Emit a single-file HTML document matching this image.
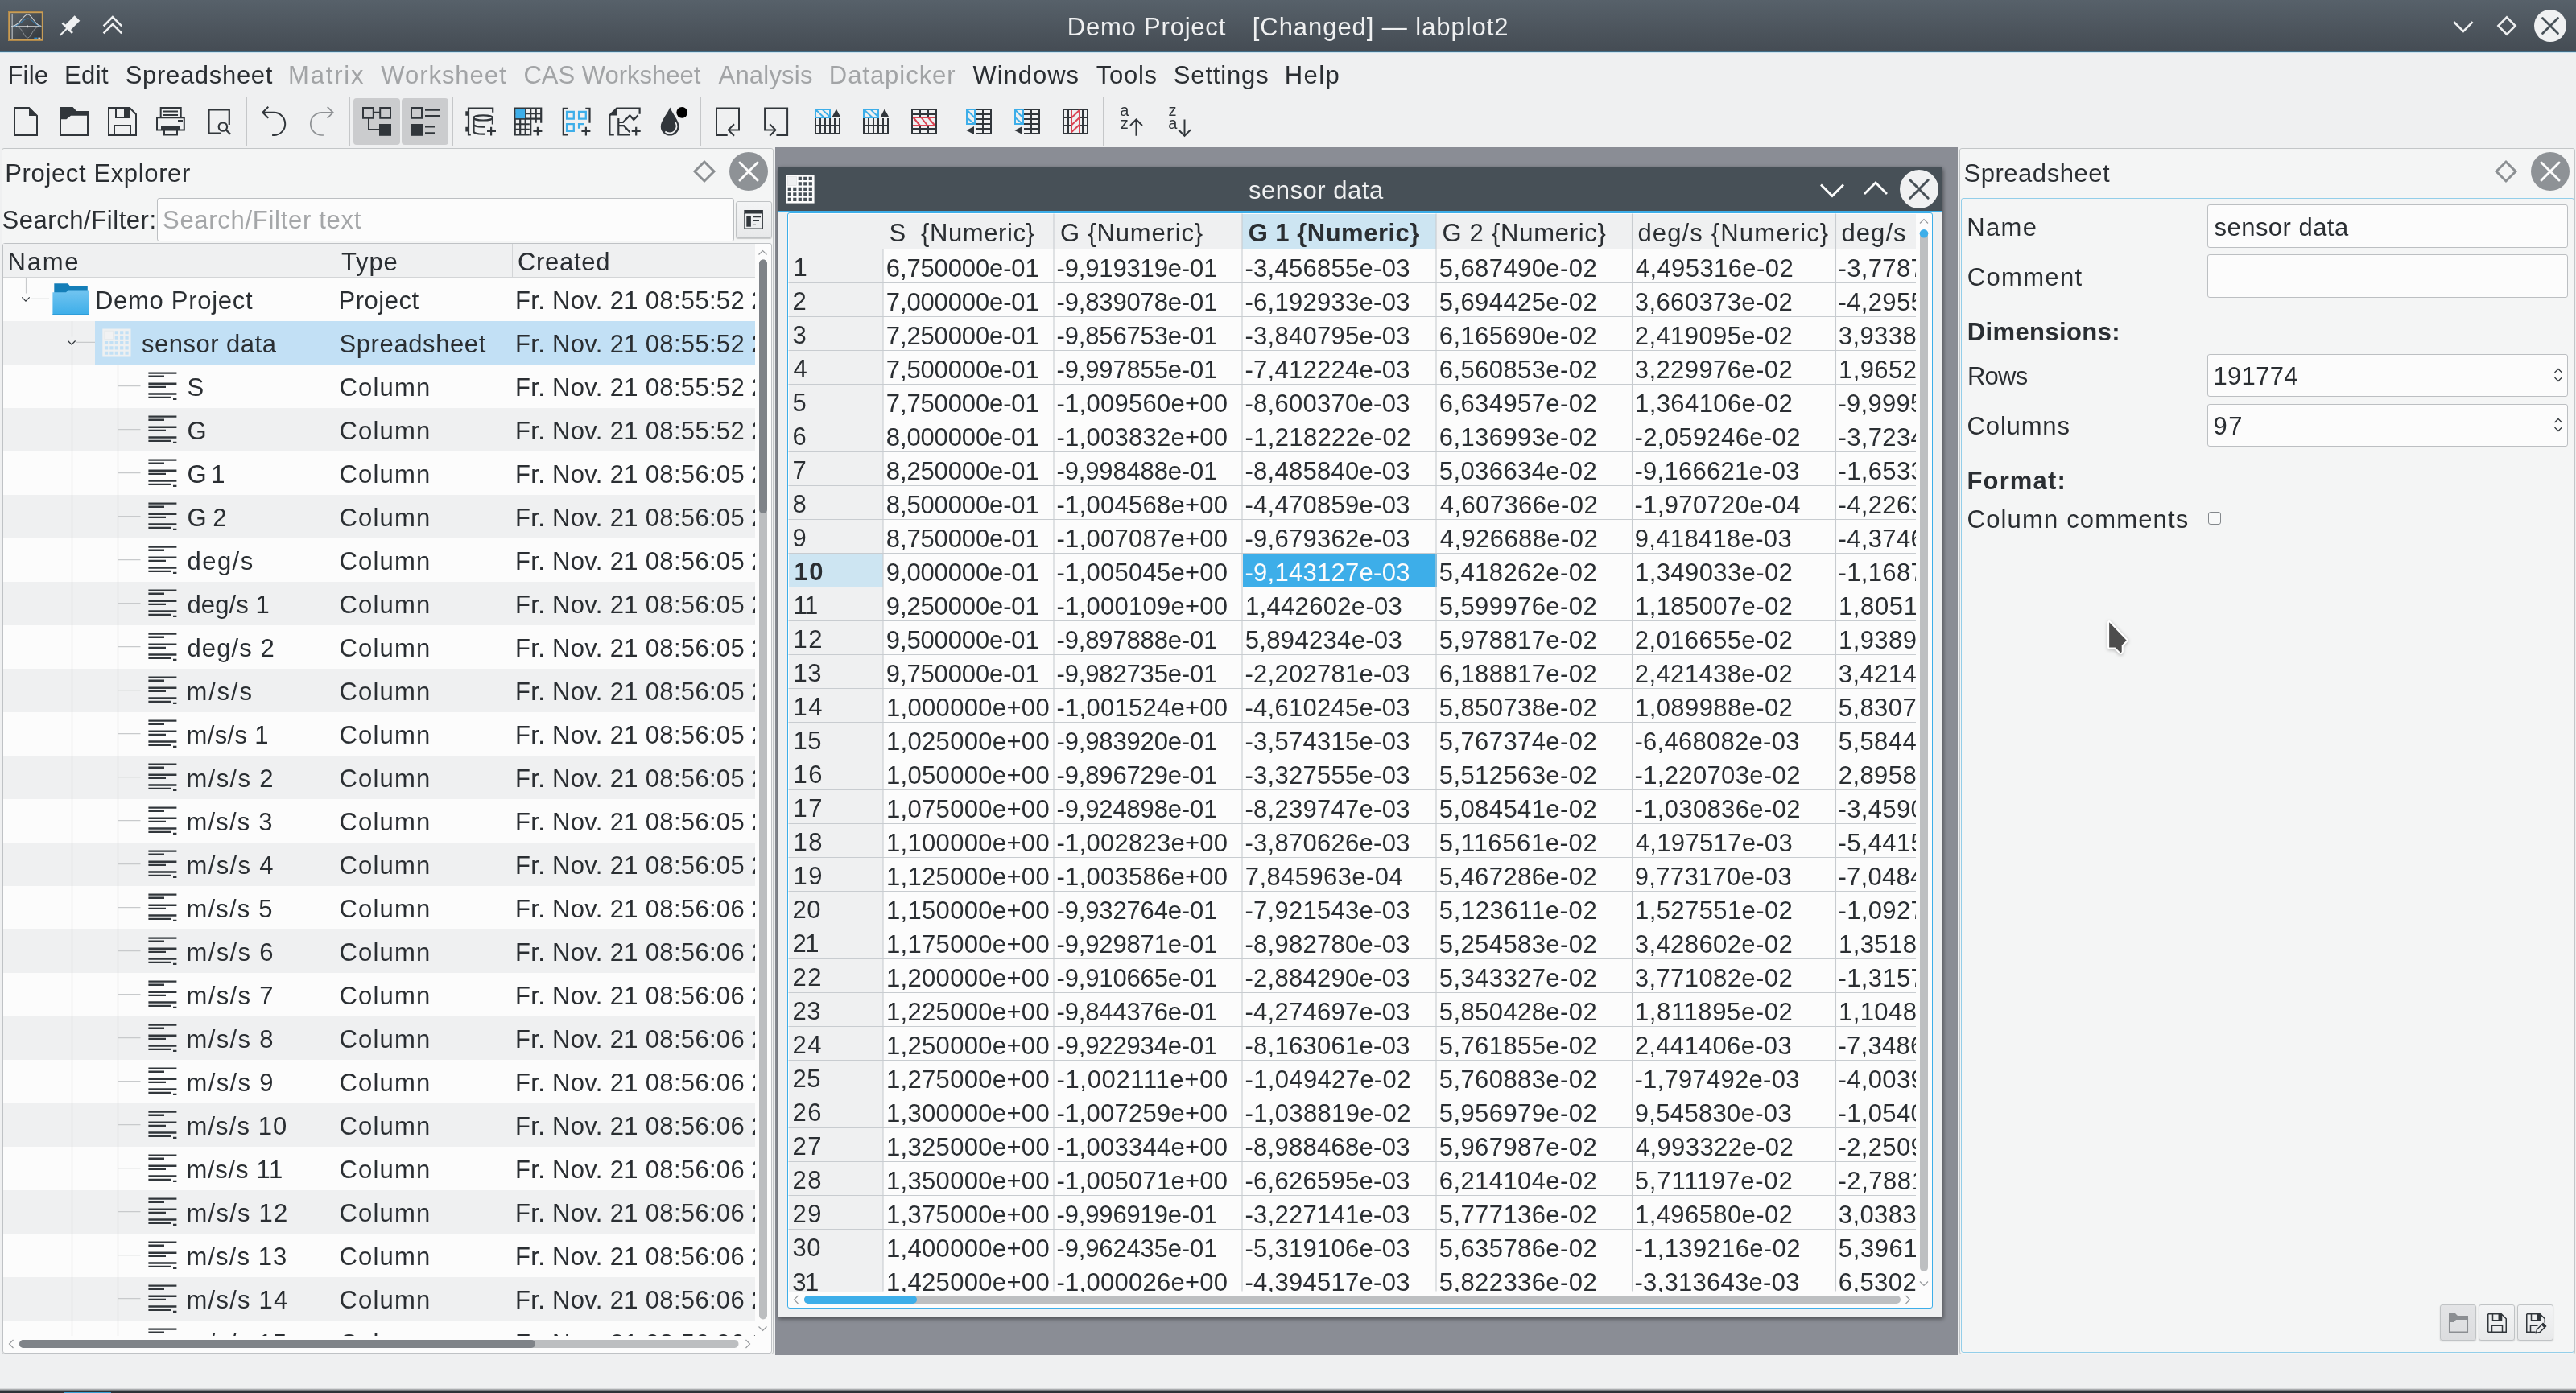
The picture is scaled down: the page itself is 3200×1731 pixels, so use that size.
<!DOCTYPE html>
<html lang="de"><head><meta charset="utf-8"><title>Demo Project [Changed] — labplot2</title>
<style>
html,body{margin:0;padding:0}
body{width:3200px;height:1731px;overflow:hidden;background:#eff0f1}
#app{position:relative;will-change:transform;width:3200px;height:1731px;overflow:hidden;background:#eff0f1;font-family:"Liberation Sans",sans-serif;font-size:31px;color:#2a2e32}
#app div,#app span,#app svg{position:absolute;box-sizing:border-box}
#app>div{left:0;top:0}
.t{white-space:pre;line-height:35px;height:35px}
.b{font-weight:bold}
</style></head>
<body><div id="app">
<div id="titlebar"><div style="left:0px;top:0px;width:3200px;height:64px;background:linear-gradient(#57616a 0%,#4a525a 70%,#454c54 100%)"></div><div style="left:0px;top:63px;width:3200px;height:3px;background:linear-gradient(rgba(61,174,233,.35) 0 33.3%,#3daee9 33.3% 66.6%,rgba(61,174,233,.22) 66.6%)"></div><svg style="left:10px;top:13.5px" width="44" height="37" viewBox="0 0 44 37" ><defs><linearGradient id="agi" x1="0" y1="0" x2="1" y2="1"><stop offset="0" stop-color="#5a6167"/><stop offset="1" stop-color="#33383d"/></linearGradient></defs><rect width="44" height="37" fill="#c79d58"/><rect x=".6" y=".6" width="42.8" height="35.8" fill="none" stroke="#a88247" stroke-width=".8"/><rect x="2.2" y="2.2" width="39.6" height="32.6" fill="url(#agi)"/><path d="M5.2 3v31" stroke="#a9adb1" stroke-width="1.4"/><path d="M4 18.8h37.5M10.5 17.6v2.4M24.4 17.4v2.8M38 17.6v2.4" stroke="#d9dbdd" stroke-width="1.1"/><path d="M6 18.6C15 18 18.5 9 24.4 9S33 18 41 18.6" fill="none" stroke="#3a86bb" stroke-width="1.1" stroke-opacity=".8"/><path d="M6 18.3C15 17.5 18.5 4 24.4 4S33 17.5 41 18.3" fill="none" stroke="#cdd0d3" stroke-width="1.15"/><path d="M11 19.2C18 20 20 33 24.4 33S31 20 38 19.2" fill="none" stroke="#8e9398" stroke-width="1"/><rect x="32.4" y="32.6" width="4" height="1.6" fill="#2f8fd0"/><rect x="37.4" y="32.6" width="3" height="1.6" fill="#d0d3d5"/></svg><svg style="left:60px;top:0px" width="120" height="64" viewBox="0 0 120 64" ><g transform="translate(23.75,34.75) rotate(-45)" fill="#eff0f1"><rect x="0" y="-4.7" width="17.3" height="9.4"/><rect x="-1.3" y="-8.9" width="2.6" height="17.8"/><rect x="-12.6" y="-1.1" width="12.6" height="2.2"/></g><path d="M68.6 32.4L79.9 21.2L91.2 32.4M68.6 41.4L79.9 30.2L91.2 41.4" fill="none" stroke="#eff0f1" stroke-width="2.6"/></svg><svg style="left:3030px;top:0px" width="170" height="64" viewBox="0 0 170 64" ><path d="M18.4 27.2L30 38.8L41.6 27.2" fill="none" stroke="#eff0f1" stroke-width="2.6"/><path d="M84 21.4L94.6 32L84 42.6L73.4 32Z" fill="none" stroke="#eff0f1" stroke-width="2.6"/><circle cx="138" cy="32" r="20" fill="#f0f1f2"/><path d="M128.5 22.5L147.5 41.5M147.5 22.5L128.5 41.5" stroke="#475057" stroke-width="2.8" stroke-linecap="round"/></svg><span class="t" style="left:1325.8px;top:16px;letter-spacing:0.79px;color:#eff0f1;">Demo Project</span><span class="t" style="left:1555.8px;top:16px;letter-spacing:0.94px;color:#eff0f1;">[Changed] — labplot2</span></div>
<div id="menubar"><span class="t" style="left:9.5px;top:76px;letter-spacing:0.18px;">File</span><span class="t" style="left:80px;top:76px;letter-spacing:0.4px;">Edit</span><span class="t" style="left:155.75px;top:76px;letter-spacing:0.68px;">Spreadsheet</span><span class="t" style="left:358px;top:76px;letter-spacing:1.82px;color:#a2a4a6;">Matrix</span><span class="t" style="left:473.25px;top:76px;letter-spacing:0.97px;color:#a2a4a6;">Worksheet</span><span class="t" style="left:650.4px;top:76px;color:#a2a4a6;">CAS Worksheet</span><span class="t" style="left:892.5px;top:76px;letter-spacing:0.21px;color:#a2a4a6;">Analysis</span><span class="t" style="left:1029.8px;top:76px;letter-spacing:0.96px;color:#a2a4a6;">Datapicker</span><span class="t" style="left:1208.4px;top:76px;letter-spacing:0.99px;">Windows</span><span class="t" style="left:1361.7px;top:76px;letter-spacing:0.76px;">Tools</span><span class="t" style="left:1457.8px;top:76px;letter-spacing:0.84px;">Settings</span><span class="t" style="left:1595.7px;top:76px;letter-spacing:1.46px;">Help</span></div>
<div id="toolbar"><div style="left:439px;top:122px;width:58px;height:58px;background:#cbccce;border-radius:4px"></div><div style="left:499px;top:122px;width:58px;height:58px;background:#cbccce;border-radius:4px"></div><div style="left:306px;top:121px;width:1px;height:60px;background:#c5c7c9"></div><div style="left:434px;top:121px;width:1px;height:60px;background:#c5c7c9"></div><div style="left:562px;top:121px;width:1px;height:60px;background:#c5c7c9"></div><div style="left:870px;top:121px;width:1px;height:60px;background:#c5c7c9"></div><div style="left:1182px;top:121px;width:1px;height:60px;background:#c5c7c9"></div><div style="left:1370px;top:121px;width:1px;height:60px;background:#c5c7c9"></div><svg style="left:0px;top:116px" width="1500" height="68" viewBox="0 116 1500 68" ><path d="M18 134h18l10 10v24H18z" fill="none" stroke="#31363b" stroke-width="2"/><path d="M36 133.5v10.5h10.5z" fill="#31363b"/><path d="M75 134v34h34v-26" fill="none" stroke="#31363b" stroke-width="2"/><path d="M74 133h16.5l4.5 5h15v5.7H88l-5.5 4.5H74z" fill="#31363b"/><path d="M135 134h26l8 8v26h-34zM144 134v12h16v-12M142 168v-12h20v12" fill="none" stroke="#31363b" stroke-width="2"/><rect x="154" y="134" width="6" height="12" fill="#31363b"/><path d="M199.7 146v-12h25v12M195 146.3h33.8v15.2H195zM204 162.5v5h16v-5" fill="none" stroke="#31363b" stroke-width="2"/><path d="M203 138.6h18M203 143h18M221 150h6" fill="none" stroke="#31363b" stroke-width="2"/><rect x="200" y="156" width="23.8" height="6" fill="#31363b"/><path d="M284.8 155v-18.5h-25.3v29.2h15" fill="none" stroke="#31363b" stroke-width="2.2"/><circle cx="276.9" cy="157.5" r="5.2" fill="none" stroke="#31363b" stroke-width="2.2"/><path d="M280.8 161.4l5.4 5.4" fill="none" stroke="#31363b" stroke-width="2.2"/><path d="M333.3 132.8l-7 7l7 7M326.5 139.8h13.6a14.1 14.1 0 0 1 0 28.2h-2" fill="none" stroke="#31363b" stroke-width="2"/><path d="M406.7 132.8l7 7l-7 7M413.5 139.8h-13.6a14.1 14.1 0 0 0 0 28.2h2" fill="none" stroke="#8e9194" stroke-width="1.7"/><path d="M451 134h12.8v12.8H451zM472.2 134H485v12.8h-12.8zM463.8 139.7h8.4M458 146.8v14.3h13" fill="none" stroke="#31363b" stroke-width="2"/><rect x="471" y="154" width="15" height="14.8" fill="#31363b"/><path d="M511 134h13v12.8h-13zM528 136.7h18M528 144.1h18M528 157.6h12M528 165.3h12" fill="none" stroke="#31363b" stroke-width="2"/><rect x="510" y="154" width="15" height="14.8" fill="#31363b"/><path d="M612.2 139.8v-5.3h-30.2v32.9h2.8" fill="none" stroke="#31363b" stroke-width="2.2"/><path d="M578.3 138.2h2.8v5.5h-2.8zM578.3 157.8h2.8v5.7h-2.8z" fill="#31363b"/><ellipse cx="600.2" cy="146.4" rx="11.7" ry="3.1" fill="none" stroke="#31363b" stroke-width="2.2"/><path d="M588.5 146.4v17c0 1.8 5 3.3 11.7 3.3h1.9M611.9 146.4v8.2M588.5 154.4c0 1.8 5 3.3 11.7 3.3h1.9M605 163h11M610.1 157.8v10.7" fill="none" stroke="#31363b" stroke-width="2.2"/><path d="M638.6 134.55H673.2M638.6 141.11H673.2M638.6 147.67H673.2M638.6 154.23H657.8M638.6 160.79H657.8M638.6 167.35H657.8M639.7 133.4V168.4M646.2 133.4V168.4M652.7 133.4V168.4M659.2 133.4V168.4M665.7 133.4V152.7M672.2 133.4V152.7" fill="none" stroke="#31363b" stroke-width="2.2"/><rect x="640.4" y="135.6" width="11.7" height="11.5" fill="#3daee9"/><path d="M662.4 163h11M667.9 157.8v10.7" fill="none" stroke="#31363b" stroke-width="2.2"/><path d="M705 134.8h-5.2v32.6h5.2M727.3 134.8h5.2v17.9" fill="none" stroke="#31363b" stroke-width="2.2"/><path d="M704.1 139h8.7v8.7h-8.7zM719.1 139h8.7v8.7h-8.7zM704.1 154.2h8.7v8.7h-8.7zM725.1 154.2h-6v5.5" fill="none" stroke="#3daee9" stroke-width="2.3"/><path d="M722.4 163h11M727.9 157.8v10.7" fill="none" stroke="#31363b" stroke-width="2.2"/><path d="M794.6 141.8v-7.1h-28.5l-8.7 8.6v24h5.4" fill="none" stroke="#31363b" stroke-width="2.2"/><path d="M766.5 133.6v9.9h-10.2z" fill="#31363b"/><path d="M768.3 146.9v20.5h14.1M768.3 152h5.7l8.4-8.6l4.8 5.4l5.4-5.4M768.3 156.2h6.7l7.4 8" fill="none" stroke="#31363b" stroke-width="2.2"/><path d="M784.7 163h11M790.2 157.8v10.7" fill="none" stroke="#31363b" stroke-width="2.2"/><path d="M832.3 133.4c-3.8 9-11.5 16.6-11.5 23.8a11.4 11.4 0 0 0 22.8 0c0-7.2-7.6-14.8-11.3-23.8z" fill="#31363b"/><path d="M838.9 151.7a8.7 8.7 0 0 1-12.6 11.8" fill="none" stroke="#eff0f1" stroke-width="1.8"/><circle cx="847.2" cy="139.8" r="6.9" fill="#000"/><path d="M903.7 168h-13.7v-33.6h28v27.1h-12.5M912 154.2l-7.3 7.3l7.3 7.3" fill="none" stroke="#31363b" stroke-width="2"/><path d="M964.4 168h13.7v-33.6h-28v27.1h12.5M956.2 154.2l7.3 7.3l-7.3 7.3" fill="none" stroke="#31363b" stroke-width="2"/><path d="M1013 136h18v10h-18zM1013.6 136.6l10 9.4M1022 136.6l9 8.6" fill="none" stroke="#3daee9" stroke-width="2"/><path d="M1033.8 145l5.1-9.6l5.1 9.6z" fill="#31363b"/><path d="M1013 147V167M1019 147V167M1025 147V167M1031 147V167M1037 147V167M1043 147V167M1012 156h32M1012 166h32" fill="none" stroke="#31363b" stroke-width="2"/><path d="M1073 136h18v10h-18zM1073.6 136.6l10 9.4M1082 136.6l9 8.6" fill="none" stroke="#3daee9" stroke-width="2"/><path d="M1093.8 145l5.1-9.6l5.1 9.6z" fill="#31363b"/><path d="M1073 147V167M1079 147V167M1085 147V167M1091 147V167M1097 147V167M1103 147V167M1072 156h32M1072 166h32" fill="none" stroke="#31363b" stroke-width="2"/><path d="M1133 136h30v30h-30zM1133 142h30M1133 160h30M1143 136v9M1153 136v9M1143 157v9M1153 157v9" fill="none" stroke="#31363b" stroke-width="2"/><path d="M1134 146h28M1134 156h28M1134.5 146l8.4 10M1144.4 146l7.8 10M1153 146l8.4 10" fill="none" stroke="#da4453" stroke-width="2"/><path d="M1201 136h10v18h-10zM1201.5 137l9 9M1201.5 146.5l8.3 7" fill="none" stroke="#3daee9" stroke-width="2"/><path d="M1210 157v10l-9.6-5z" fill="#31363b"/><path d="M1212 136H1232M1212 142H1232M1212 148H1232M1212 154H1232M1212 160H1232M1212 166H1232M1221 135V167M1231 135V167" fill="none" stroke="#31363b" stroke-width="2"/><path d="M1261 136h10v18h-10zM1261.5 137l9 9M1261.5 146.5l8.3 7" fill="none" stroke="#3daee9" stroke-width="2"/><path d="M1270 157v10l-9.6-5z" fill="#31363b"/><path d="M1272 136H1292M1272 142H1292M1272 148H1292M1272 154H1292M1272 160H1292M1272 166H1292M1281 135V167M1291 135V167" fill="none" stroke="#31363b" stroke-width="2"/><path d="M1321 136h30v30h-30zM1321 146h9M1342 146h9M1321 156h9M1342 156h9M1327 136v30M1345 136v30" fill="none" stroke="#31363b" stroke-width="2"/><path d="M1331 137v28M1341 137v28M1331.2 146.3l9.6-9.3M1331.2 155.2l9.6-9M1331.2 164l9.6-9" fill="none" stroke="#da4453" stroke-width="2"/><path d="M1404 156l7.5-7.5l7.5 7.5M1411.5 148.5v20.3" fill="none" stroke="#31363b" stroke-width="2"/><path d="M1464 161.3l7.5 7.5l7.5-7.5M1471.5 148.5v20.3" fill="none" stroke="#31363b" stroke-width="2"/><g font-family="Liberation Sans, sans-serif" font-size="20" fill="#31363b"><text x="1391.3" y="144">a</text><text x="1391.8" y="159.8">z</text><text x="1451.6" y="144">z</text><text x="1451.3" y="160">a</text></g></svg></div>
<div id="project-explorer"><div style="left:2px;top:184px;width:959px;height:1499px;border:1px solid #c3c6c8;border-radius:3px;background:#f4f5f5"></div><span class="t" style="left:6.3px;top:198px;letter-spacing:0.63px;">Project Explorer</span><svg style="left:850px;top:185px" width="110" height="56" viewBox="0 0 110 56" ><path d="M25 16l12 12l-12 12l-12-12z" fill="none" stroke="#8b8f92" stroke-width="3"/><circle cx="80" cy="28" r="24" fill="#8e9296"/><path d="M69 17l22 22M91 17l-22 22" stroke="#fcfcfc" stroke-width="3" stroke-linecap="round"/></svg><span class="t" style="left:2.5px;top:256px;letter-spacing:0.56px;">Search/Filter:</span><div style="left:195px;top:246px;width:717px;height:54px;border:1px solid #bcbfc2;border-radius:3px;background:#fcfcfc"></div><span class="t" style="left:202px;top:256px;letter-spacing:0.71px;color:#a4a6a8;">Search/Filter text</span><div style="left:914px;top:250px;width:45px;height:46px;border:1px solid #c0c3c5;border-radius:3px;background:linear-gradient(#f3f4f5,#e8e9ea);box-shadow:0 1px 1px rgba(0,0,0,.18)"></div><svg style="left:920px;top:256px" width="34" height="34" viewBox="920 256 34 34" ><rect x="924.3" y="261" width="23.6" height="4.5" fill="#31363b"/><path d="M925 265v19.3h22.2V265" fill="none" stroke="#31363b" stroke-width="1.4"/><rect x="927.3" y="268.2" width="5.6" height="13.5" fill="#31363b"/><path d="M935 269.6h10M935 274.4h8M935 279.4h4" stroke="#31363b" stroke-width="1.3"/></svg><div style="left:3px;top:302px;width:956px;height:1380px;border:1px solid #bfc2c5;border-radius:3px;background:#fcfcfc"></div><div style="left:4px;top:303px;width:934px;height:42px;background:#eff0f1;border-bottom:1px solid #d3d5d7"></div><div style="left:417px;top:303px;width:1px;height:42px;background:#d3d5d7"></div><div style="left:636px;top:303px;width:1px;height:42px;background:#d3d5d7"></div><span class="t" style="left:9.5px;top:308px;letter-spacing:1.77px;">Name</span><span class="t" style="left:424px;top:308px;letter-spacing:0.84px;">Type</span><span class="t" style="left:643px;top:308px;letter-spacing:0.7px;">Created</span><div id="tree" style="left:4px;top:345px;width:934px;height:1315px;overflow:hidden"><div style="left:0px;top:54px;width:934px;height:54px;background:#eff0f1"></div><div style="left:0px;top:162px;width:934px;height:54px;background:#eff0f1"></div><div style="left:0px;top:270px;width:934px;height:54px;background:#eff0f1"></div><div style="left:0px;top:378px;width:934px;height:54px;background:#eff0f1"></div><div style="left:0px;top:486px;width:934px;height:54px;background:#eff0f1"></div><div style="left:0px;top:594px;width:934px;height:54px;background:#eff0f1"></div><div style="left:0px;top:702px;width:934px;height:54px;background:#eff0f1"></div><div style="left:0px;top:810px;width:934px;height:54px;background:#eff0f1"></div><div style="left:0px;top:918px;width:934px;height:54px;background:#eff0f1"></div><div style="left:0px;top:1026px;width:934px;height:54px;background:#eff0f1"></div><div style="left:0px;top:1134px;width:934px;height:54px;background:#eff0f1"></div><div style="left:0px;top:1242px;width:934px;height:54px;background:#eff0f1"></div><div style="left:114px;top:54px;width:820px;height:54px;background:#c2e0f5"></div><svg style="left:0px;top:0px" width="934" height="1315" viewBox="4 0 934 1315" ><path d="M32.5 0v19.5M38 26.3h23M89.5 54v19.5M89.5 86v1240M95 80.4h23M146.5 108v1220" stroke="#c8cacc" stroke-width="1.2" fill="none"/><path d="M146.5 134.7h28M146.5 188.7h28M146.5 242.7h28M146.5 296.7h28M146.5 350.7h28M146.5 404.7h28M146.5 458.7h28M146.5 512.7h28M146.5 566.7h28M146.5 620.7h28M146.5 674.7h28M146.5 728.7h28M146.5 782.7h28M146.5 836.7h28M146.5 890.7h28M146.5 944.7h28M146.5 998.7h28M146.5 1052.7h28M146.5 1106.7h28M146.5 1160.7h28M146.5 1214.7h28M146.5 1268.7h28M146.5 1322.7h28" stroke="#c8cacc" stroke-width="1.2" fill="none"/><path d="M27.3 24.4l4.7 4.7l4.7-4.7M84.4 78.5l4.6 4.6l4.6-4.6" stroke="#31363b" stroke-width="1.3" fill="none"/><defs><linearGradient id="fg" x1="0" y1="0" x2="0" y2="1"><stop offset="0" stop-color="#72c4f0"/><stop offset="1" stop-color="#3daee9"/></linearGradient></defs><path d="M67.3 7.3h17l2.5 3h22v12h-41.5z" fill="#147eb8"/><path d="M65.4 18.2h16.6l3-2.6h25.6v30.6h-45.2z" fill="url(#fg)"/><path d="M65.4 45.2h45.2v1.2h-45.2z" fill="#2a97d3"/><rect x="127.3" y="63.5" width="35.2" height="35" fill="#eef0f1"/><path d="M142.71 66.15h4.2v4.2h-4.2zM149.09 66.15h4.2v4.2h-4.2zM155.47 66.15h4.2v4.2h-4.2zM142.71 72.53h4.2v4.2h-4.2zM149.09 72.53h4.2v4.2h-4.2zM155.47 72.53h4.2v4.2h-4.2zM129.95 78.91h4.2v4.2h-4.2zM136.33 78.91h4.2v4.2h-4.2zM142.71 78.91h4.2v4.2h-4.2zM149.09 78.91h4.2v4.2h-4.2zM155.47 78.91h4.2v4.2h-4.2zM129.95 85.29h4.2v4.2h-4.2zM136.33 85.29h4.2v4.2h-4.2zM142.71 85.29h4.2v4.2h-4.2zM149.09 85.29h4.2v4.2h-4.2zM155.47 85.29h4.2v4.2h-4.2zM129.95 91.67h4.2v4.2h-4.2zM136.33 91.67h4.2v4.2h-4.2zM142.71 91.67h4.2v4.2h-4.2zM149.09 91.67h4.2v4.2h-4.2zM155.47 91.67h4.2v4.2h-4.2z" fill="#c2e0f5"/><rect x="129.95" y="66.15" width="10.6" height="10.6" fill="#f1f2f3" stroke="#e1e4e6" stroke-width=".600"/><path d="M184.4 118.6h35M184.4 122.75h19.6M184.4 131.75h35M184.4 135.9h21.6M184.4 144.5h35M184.4 148.9h28.6M215 150.9h4.4" stroke="#31363b" stroke-width="2.3" fill="none"/><path d="M184.4 172.6h35M184.4 176.75h19.6M184.4 185.75h35M184.4 189.9h21.6M184.4 198.5h35M184.4 202.9h28.6M215 204.9h4.4" stroke="#31363b" stroke-width="2.3" fill="none"/><path d="M184.4 226.6h35M184.4 230.75h19.6M184.4 239.75h35M184.4 243.9h21.6M184.4 252.5h35M184.4 256.9h28.6M215 258.9h4.4" stroke="#31363b" stroke-width="2.3" fill="none"/><path d="M184.4 280.6h35M184.4 284.75h19.6M184.4 293.75h35M184.4 297.9h21.6M184.4 306.5h35M184.4 310.9h28.6M215 312.9h4.4" stroke="#31363b" stroke-width="2.3" fill="none"/><path d="M184.4 334.6h35M184.4 338.75h19.6M184.4 347.75h35M184.4 351.9h21.6M184.4 360.5h35M184.4 364.9h28.6M215 366.9h4.4" stroke="#31363b" stroke-width="2.3" fill="none"/><path d="M184.4 388.6h35M184.4 392.75h19.6M184.4 401.75h35M184.4 405.9h21.6M184.4 414.5h35M184.4 418.9h28.6M215 420.9h4.4" stroke="#31363b" stroke-width="2.3" fill="none"/><path d="M184.4 442.6h35M184.4 446.75h19.6M184.4 455.75h35M184.4 459.9h21.6M184.4 468.5h35M184.4 472.9h28.6M215 474.9h4.4" stroke="#31363b" stroke-width="2.3" fill="none"/><path d="M184.4 496.6h35M184.4 500.75h19.6M184.4 509.75h35M184.4 513.9h21.6M184.4 522.5h35M184.4 526.9h28.6M215 528.9h4.4" stroke="#31363b" stroke-width="2.3" fill="none"/><path d="M184.4 550.6h35M184.4 554.75h19.6M184.4 563.75h35M184.4 567.9h21.6M184.4 576.5h35M184.4 580.9h28.6M215 582.9h4.4" stroke="#31363b" stroke-width="2.3" fill="none"/><path d="M184.4 604.6h35M184.4 608.75h19.6M184.4 617.75h35M184.4 621.9h21.6M184.4 630.5h35M184.4 634.9h28.6M215 636.9h4.4" stroke="#31363b" stroke-width="2.3" fill="none"/><path d="M184.4 658.6h35M184.4 662.75h19.6M184.4 671.75h35M184.4 675.9h21.6M184.4 684.5h35M184.4 688.9h28.6M215 690.9h4.4" stroke="#31363b" stroke-width="2.3" fill="none"/><path d="M184.4 712.6h35M184.4 716.75h19.6M184.4 725.75h35M184.4 729.9h21.6M184.4 738.5h35M184.4 742.9h28.6M215 744.9h4.4" stroke="#31363b" stroke-width="2.3" fill="none"/><path d="M184.4 766.6h35M184.4 770.75h19.6M184.4 779.75h35M184.4 783.9h21.6M184.4 792.5h35M184.4 796.9h28.6M215 798.9h4.4" stroke="#31363b" stroke-width="2.3" fill="none"/><path d="M184.4 820.6h35M184.4 824.75h19.6M184.4 833.75h35M184.4 837.9h21.6M184.4 846.5h35M184.4 850.9h28.6M215 852.9h4.4" stroke="#31363b" stroke-width="2.3" fill="none"/><path d="M184.4 874.6h35M184.4 878.75h19.6M184.4 887.75h35M184.4 891.9h21.6M184.4 900.5h35M184.4 904.9h28.6M215 906.9h4.4" stroke="#31363b" stroke-width="2.3" fill="none"/><path d="M184.4 928.6h35M184.4 932.75h19.6M184.4 941.75h35M184.4 945.9h21.6M184.4 954.5h35M184.4 958.9h28.6M215 960.9h4.4" stroke="#31363b" stroke-width="2.3" fill="none"/><path d="M184.4 982.6h35M184.4 986.75h19.6M184.4 995.75h35M184.4 999.9h21.6M184.4 1008.5h35M184.4 1012.9h28.6M215 1014.9h4.4" stroke="#31363b" stroke-width="2.3" fill="none"/><path d="M184.4 1036.6h35M184.4 1040.75h19.6M184.4 1049.75h35M184.4 1053.9h21.6M184.4 1062.5h35M184.4 1066.9h28.6M215 1068.9h4.4" stroke="#31363b" stroke-width="2.3" fill="none"/><path d="M184.4 1090.6h35M184.4 1094.75h19.6M184.4 1103.75h35M184.4 1107.9h21.6M184.4 1116.5h35M184.4 1120.9h28.6M215 1122.9h4.4" stroke="#31363b" stroke-width="2.3" fill="none"/><path d="M184.4 1144.6h35M184.4 1148.75h19.6M184.4 1157.75h35M184.4 1161.9h21.6M184.4 1170.5h35M184.4 1174.9h28.6M215 1176.9h4.4" stroke="#31363b" stroke-width="2.3" fill="none"/><path d="M184.4 1198.6h35M184.4 1202.75h19.6M184.4 1211.75h35M184.4 1215.9h21.6M184.4 1224.5h35M184.4 1228.9h28.6M215 1230.9h4.4" stroke="#31363b" stroke-width="2.3" fill="none"/><path d="M184.4 1252.6h35M184.4 1256.75h19.6M184.4 1265.75h35M184.4 1269.9h21.6M184.4 1278.5h35M184.4 1282.9h28.6M215 1284.9h4.4" stroke="#31363b" stroke-width="2.3" fill="none"/><path d="M184.4 1306.6h35M184.4 1310.75h19.6M184.4 1319.75h35M184.4 1323.9h21.6M184.4 1332.5h35M184.4 1336.9h28.6M215 1338.9h4.4" stroke="#31363b" stroke-width="2.3" fill="none"/></svg><span class="t" style="left:114px;top:11px;letter-spacing:0.71px;">Demo Project</span><span class="t" style="left:416.5px;top:11px;letter-spacing:0.53px;">Project</span><span class="t" style="left:636px;top:11px;letter-spacing:0.32px;">Fr. Nov. 21 08:55:52</span><span class="t" style="left:929.2px;top:11px;letter-spacing:0.49px;">2025</span><span class="t" style="left:172px;top:65px;letter-spacing:0.49px;">sensor data</span><span class="t" style="left:417.5px;top:65px;letter-spacing:0.6px;">Spreadsheet</span><span class="t" style="left:636px;top:65px;letter-spacing:0.32px;">Fr. Nov. 21 08:55:52</span><span class="t" style="left:929.2px;top:65px;letter-spacing:0.49px;">2025</span><span class="t" style="left:228.5px;top:119px;">S</span><span class="t" style="left:417.5px;top:119px;letter-spacing:1.18px;">Column</span><span class="t" style="left:636px;top:119px;letter-spacing:0.32px;">Fr. Nov. 21 08:55:52</span><span class="t" style="left:929.2px;top:119px;letter-spacing:0.49px;">2025</span><span class="t" style="left:228.5px;top:173px;">G</span><span class="t" style="left:417.5px;top:173px;letter-spacing:1.18px;">Column</span><span class="t" style="left:636px;top:173px;letter-spacing:0.32px;">Fr. Nov. 21 08:55:52</span><span class="t" style="left:929.2px;top:173px;letter-spacing:0.49px;">2025</span><span class="t" style="left:228.5px;top:227px;letter-spacing:-1.5px;">G 1</span><span class="t" style="left:417.5px;top:227px;letter-spacing:1.18px;">Column</span><span class="t" style="left:636px;top:227px;letter-spacing:0.32px;">Fr. Nov. 21 08:56:05</span><span class="t" style="left:929.2px;top:227px;letter-spacing:0.49px;">2025</span><span class="t" style="left:228.5px;top:281px;letter-spacing:-0.55px;">G 2</span><span class="t" style="left:417.5px;top:281px;letter-spacing:1.18px;">Column</span><span class="t" style="left:636px;top:281px;letter-spacing:0.32px;">Fr. Nov. 21 08:56:05</span><span class="t" style="left:929.2px;top:281px;letter-spacing:0.49px;">2025</span><span class="t" style="left:228.5px;top:335px;letter-spacing:1.45px;">deg/s</span><span class="t" style="left:417.5px;top:335px;letter-spacing:1.18px;">Column</span><span class="t" style="left:636px;top:335px;letter-spacing:0.32px;">Fr. Nov. 21 08:56:05</span><span class="t" style="left:929.2px;top:335px;letter-spacing:0.49px;">2025</span><span class="t" style="left:228.5px;top:389px;letter-spacing:0.1px;">deg/s 1</span><span class="t" style="left:417.5px;top:389px;letter-spacing:1.18px;">Column</span><span class="t" style="left:636px;top:389px;letter-spacing:0.32px;">Fr. Nov. 21 08:56:05</span><span class="t" style="left:929.2px;top:389px;letter-spacing:0.49px;">2025</span><span class="t" style="left:228.5px;top:443px;letter-spacing:1.1px;">deg/s 2</span><span class="t" style="left:417.5px;top:443px;letter-spacing:1.18px;">Column</span><span class="t" style="left:636px;top:443px;letter-spacing:0.32px;">Fr. Nov. 21 08:56:05</span><span class="t" style="left:929.2px;top:443px;letter-spacing:0.49px;">2025</span><span class="t" style="left:227.5px;top:497px;letter-spacing:1.84px;">m/s/s</span><span class="t" style="left:417.5px;top:497px;letter-spacing:1.18px;">Column</span><span class="t" style="left:636px;top:497px;letter-spacing:0.32px;">Fr. Nov. 21 08:56:05</span><span class="t" style="left:929.2px;top:497px;letter-spacing:0.49px;">2025</span><span class="t" style="left:227.5px;top:551px;letter-spacing:0.36px;">m/s/s 1</span><span class="t" style="left:417.5px;top:551px;letter-spacing:1.18px;">Column</span><span class="t" style="left:636px;top:551px;letter-spacing:0.32px;">Fr. Nov. 21 08:56:05</span><span class="t" style="left:929.2px;top:551px;letter-spacing:0.49px;">2025</span><span class="t" style="left:227.5px;top:605px;letter-spacing:1.36px;">m/s/s 2</span><span class="t" style="left:417.5px;top:605px;letter-spacing:1.18px;">Column</span><span class="t" style="left:636px;top:605px;letter-spacing:0.32px;">Fr. Nov. 21 08:56:05</span><span class="t" style="left:929.2px;top:605px;letter-spacing:0.49px;">2025</span><span class="t" style="left:227.5px;top:659px;letter-spacing:1.19px;">m/s/s 3</span><span class="t" style="left:417.5px;top:659px;letter-spacing:1.18px;">Column</span><span class="t" style="left:636px;top:659px;letter-spacing:0.32px;">Fr. Nov. 21 08:56:05</span><span class="t" style="left:929.2px;top:659px;letter-spacing:0.49px;">2025</span><span class="t" style="left:227.5px;top:713px;letter-spacing:1.36px;">m/s/s 4</span><span class="t" style="left:417.5px;top:713px;letter-spacing:1.18px;">Column</span><span class="t" style="left:636px;top:713px;letter-spacing:0.32px;">Fr. Nov. 21 08:56:05</span><span class="t" style="left:929.2px;top:713px;letter-spacing:0.49px;">2025</span><span class="t" style="left:227.5px;top:767px;letter-spacing:1.19px;">m/s/s 5</span><span class="t" style="left:417.5px;top:767px;letter-spacing:1.18px;">Column</span><span class="t" style="left:636px;top:767px;letter-spacing:0.32px;">Fr. Nov. 21 08:56:06</span><span class="t" style="left:929.2px;top:767px;letter-spacing:0.49px;">2025</span><span class="t" style="left:227.5px;top:821px;letter-spacing:1.36px;">m/s/s 6</span><span class="t" style="left:417.5px;top:821px;letter-spacing:1.18px;">Column</span><span class="t" style="left:636px;top:821px;letter-spacing:0.32px;">Fr. Nov. 21 08:56:06</span><span class="t" style="left:929.2px;top:821px;letter-spacing:0.49px;">2025</span><span class="t" style="left:227.5px;top:875px;letter-spacing:1.36px;">m/s/s 7</span><span class="t" style="left:417.5px;top:875px;letter-spacing:1.18px;">Column</span><span class="t" style="left:636px;top:875px;letter-spacing:0.32px;">Fr. Nov. 21 08:56:06</span><span class="t" style="left:929.2px;top:875px;letter-spacing:0.49px;">2025</span><span class="t" style="left:227.5px;top:929px;letter-spacing:1.36px;">m/s/s 8</span><span class="t" style="left:417.5px;top:929px;letter-spacing:1.18px;">Column</span><span class="t" style="left:636px;top:929px;letter-spacing:0.32px;">Fr. Nov. 21 08:56:06</span><span class="t" style="left:929.2px;top:929px;letter-spacing:0.49px;">2025</span><span class="t" style="left:227.5px;top:983px;letter-spacing:1.36px;">m/s/s 9</span><span class="t" style="left:417.5px;top:983px;letter-spacing:1.18px;">Column</span><span class="t" style="left:636px;top:983px;letter-spacing:0.32px;">Fr. Nov. 21 08:56:06</span><span class="t" style="left:929.2px;top:983px;letter-spacing:0.49px;">2025</span><span class="t" style="left:227.5px;top:1037px;letter-spacing:1.09px;">m/s/s 10</span><span class="t" style="left:417.5px;top:1037px;letter-spacing:1.18px;">Column</span><span class="t" style="left:636px;top:1037px;letter-spacing:0.32px;">Fr. Nov. 21 08:56:06</span><span class="t" style="left:929.2px;top:1037px;letter-spacing:0.49px;">2025</span><span class="t" style="left:227.5px;top:1091px;letter-spacing:0.71px;">m/s/s 11</span><span class="t" style="left:417.5px;top:1091px;letter-spacing:1.18px;">Column</span><span class="t" style="left:636px;top:1091px;letter-spacing:0.32px;">Fr. Nov. 21 08:56:06</span><span class="t" style="left:929.2px;top:1091px;letter-spacing:0.49px;">2025</span><span class="t" style="left:227.5px;top:1145px;letter-spacing:1.23px;">m/s/s 12</span><span class="t" style="left:417.5px;top:1145px;letter-spacing:1.18px;">Column</span><span class="t" style="left:636px;top:1145px;letter-spacing:0.32px;">Fr. Nov. 21 08:56:06</span><span class="t" style="left:929.2px;top:1145px;letter-spacing:0.49px;">2025</span><span class="t" style="left:227.5px;top:1199px;letter-spacing:1.09px;">m/s/s 13</span><span class="t" style="left:417.5px;top:1199px;letter-spacing:1.18px;">Column</span><span class="t" style="left:636px;top:1199px;letter-spacing:0.32px;">Fr. Nov. 21 08:56:06</span><span class="t" style="left:929.2px;top:1199px;letter-spacing:0.49px;">2025</span><span class="t" style="left:227.5px;top:1253px;letter-spacing:1.23px;">m/s/s 14</span><span class="t" style="left:417.5px;top:1253px;letter-spacing:1.18px;">Column</span><span class="t" style="left:636px;top:1253px;letter-spacing:0.32px;">Fr. Nov. 21 08:56:06</span><span class="t" style="left:929.2px;top:1253px;letter-spacing:0.49px;">2025</span><span class="t" style="left:227.5px;top:1307px;letter-spacing:1.09px;">m/s/s 15</span><span class="t" style="left:417.5px;top:1307px;letter-spacing:1.18px;">Column</span><span class="t" style="left:636px;top:1307px;letter-spacing:0.32px;">Fr. Nov. 21 08:56:06</span><span class="t" style="left:929.2px;top:1307px;letter-spacing:0.49px;">2025</span></div><svg style="left:4px;top:303px" width="955" height="1378" viewBox="4 303 955 1378" ><path d="M942.5 316.5l5-5l5 5M942.5 1648.5l5 5l5-5M16.5 1665l-5 5l5 5M926.5 1665l5 5l-5 5" stroke="#96999c" stroke-width="1.2" fill="none"/><rect x="943" y="322.5" width="10" height="1317" rx="5" fill="#bcbec0"/><rect x="943" y="322.5" width="10" height="315.5" rx="5" fill="#7f8388"/><rect x="24" y="1665" width="893.5" height="10" rx="5" fill="#bcbec0"/><rect x="24" y="1665" width="641" height="10" rx="5" fill="#7f8388"/></svg></div>
<div id="mdi-area"><div style="left:963px;top:183px;width:1469px;height:1501px;background:#8a8d95"></div><div style="left:966px;top:207px;width:1447px;height:1430px;background:#eff0f1;border-radius:3px 4px 0 0;box-shadow:1px 2px 5px rgba(0,0,0,.45)"></div><div style="left:966px;top:207px;width:1447px;height:55.5px;background:#475057;border-radius:3px 4px 0 0"></div><div style="left:966px;top:262px;width:1447px;height:1px;background:#3daee9"></div><svg style="left:976.3px;top:217.3px" width="35.6" height="35.6" viewBox="0 0 35.6 35.6" ><rect width="35.6" height="35.6" fill="#fcfcfc"/><path d="M15.7 2.7h4.2v4.2h-4.2zM22.2 2.7h4.2v4.2h-4.2zM28.7 2.7h4.2v4.2h-4.2zM15.7 9.2h4.2v4.2h-4.2zM22.2 9.2h4.2v4.2h-4.2zM28.7 9.2h4.2v4.2h-4.2zM2.7 15.7h4.2v4.2h-4.2zM9.2 15.7h4.2v4.2h-4.2zM15.7 15.7h4.2v4.2h-4.2zM22.2 15.7h4.2v4.2h-4.2zM28.7 15.7h4.2v4.2h-4.2zM2.7 22.2h4.2v4.2h-4.2zM9.2 22.2h4.2v4.2h-4.2zM15.7 22.2h4.2v4.2h-4.2zM22.2 22.2h4.2v4.2h-4.2zM28.7 22.2h4.2v4.2h-4.2zM2.7 28.7h4.2v4.2h-4.2zM9.2 28.7h4.2v4.2h-4.2zM15.7 28.7h4.2v4.2h-4.2zM22.2 28.7h4.2v4.2h-4.2zM28.7 28.7h4.2v4.2h-4.2z" fill="#475057"/><rect x="2.6" y="2.6" width="10.8" height="10.8" fill="#eff0f1" stroke="#d4d6d8" stroke-width=".500"/></svg><span class="t" style="left:1551px;top:219px;letter-spacing:0.52px;color:#eff0f1;">sensor data</span><svg style="left:2250px;top:207px" width="165" height="56" viewBox="0 0 165 56" ><path d="M12 22.5l14 14l14-14M66 34l14-14l14 14" fill="none" stroke="#fcfcfc" stroke-width="2.8"/><circle cx="134" cy="28" r="24" fill="#f0f1f2"/><path d="M122.8 16.8l22.4 22.4M145.2 16.8l-22.4 22.4" stroke="#475057" stroke-width="3" stroke-linecap="round"/></svg><div style="left:978px;top:264px;width:1423px;height:1362px;border:1px solid #3daee9;border-radius:3px;background:#fcfcfc"></div><div style="left:979.5px;top:265.5px;width:1400.5px;height:44px;background:#eff0f1"></div><div style="left:979.5px;top:265.5px;width:117.5px;height:1339px;background:#eff0f1"></div><div style="left:1543px;top:265.5px;width:241px;height:44px;background:#cde5f2"></div><div style="left:979.5px;top:688px;width:117.5px;height:41.5px;background:#cde5f2"></div><div style="left:1543.5px;top:688px;width:241px;height:40.5px;background:#3daee9"></div><svg style="left:979px;top:265px" width="1421" height="1360" viewBox="979 265 1421 1360" ><path d="M1097 309.5H2380M979.5 351.5H2380M979.5 393.5H2380M979.5 435.5H2380M979.5 477.5H2380M979.5 519.5H2380M979.5 561.5H2380M979.5 603.5H2380M979.5 645.5H2380M979.5 687.5H2380M979.5 729.5H2380M979.5 771.5H2380M979.5 813.5H2380M979.5 855.5H2380M979.5 897.5H2380M979.5 939.5H2380M979.5 981.5H2380M979.5 1023.5H2380M979.5 1065.5H2380M979.5 1107.5H2380M979.5 1149.5H2380M979.5 1191.5H2380M979.5 1233.5H2380M979.5 1275.5H2380M979.5 1317.5H2380M979.5 1359.5H2380M979.5 1401.5H2380M979.5 1443.5H2380M979.5 1485.5H2380M979.5 1527.5H2380M979.5 1569.5H2380M1097 309.5V1604.5M1309 265.5V1604.5M1543 265.5V1604.5M1784 265.5V1604.5M2027.5 265.5V1604.5M2280.5 265.5V1604.5" stroke="#c8ccd0" stroke-width="1.1" fill="none"/><path d="M2385 277.5l5-5l5 5M2385 1592.5l5 5l5-5M991.5 1610l-5 5l5 5M2367.5 1610l5 5l-5 5" stroke="#96999c" stroke-width="1.2" fill="none"/><rect x="2385" y="286" width="10" height="1294" rx="5" fill="#bdbfc1"/><circle cx="2390" cy="290.3" r="5.3" fill="#3daee9"/><rect x="999" y="1610" width="1362" height="10" rx="5" fill="#bdbfc1"/><rect x="999" y="1610" width="140" height="10" rx="5" fill="#3daee9"/></svg><div id="colhead" style="left:1097px;top:265.5px;width:1283px;height:44px;overflow:hidden"><span class="t" style="left:7.4px;top:6px;letter-spacing:0.59px;">S  {Numeric}</span><span class="t" style="left:219.9px;top:6px;letter-spacing:0.85px;">G {Numeric}</span><span class="t b" style="left:453.65px;top:6px;letter-spacing:0.5px;">G 1 {Numeric}</span><span class="t" style="left:694.4px;top:6px;letter-spacing:0.74px;">G 2 {Numeric}</span><span class="t" style="left:937.4px;top:6px;letter-spacing:1.16px;">deg/s {Numeric}</span><span class="t" style="left:1190.4px;top:6px;letter-spacing:1.09px;">deg/s 1 {Numeric}</span></div><div id="rowhead"><span class="t" style="left:985.5px;top:315px;">1</span><span class="t" style="left:984.5px;top:357px;">2</span><span class="t" style="left:984.5px;top:399px;">3</span><span class="t" style="left:985.5px;top:441px;">4</span><span class="t" style="left:984.5px;top:483px;">5</span><span class="t" style="left:984.5px;top:525px;">6</span><span class="t" style="left:984.5px;top:567px;">7</span><span class="t" style="left:984.5px;top:609px;">8</span><span class="t" style="left:984.5px;top:651px;">9</span><span class="t b" style="left:986.5px;top:693px;letter-spacing:1.49px;">10</span><span class="t" style="left:985.5px;top:735px;letter-spacing:-1.5px;">11</span><span class="t" style="left:985.5px;top:777px;letter-spacing:1.49px;">12</span><span class="t" style="left:985.5px;top:819px;letter-spacing:0.49px;">13</span><span class="t" style="left:985.5px;top:861px;letter-spacing:1.49px;">14</span><span class="t" style="left:985.5px;top:903px;letter-spacing:0.49px;">15</span><span class="t" style="left:985.5px;top:945px;letter-spacing:1.49px;">16</span><span class="t" style="left:985.5px;top:987px;letter-spacing:1.49px;">17</span><span class="t" style="left:985.5px;top:1029px;letter-spacing:1.49px;">18</span><span class="t" style="left:985.5px;top:1071px;letter-spacing:1.49px;">19</span><span class="t" style="left:984.5px;top:1113px;letter-spacing:0.49px;">20</span><span class="t" style="left:984.5px;top:1155px;letter-spacing:-1.5px;">21</span><span class="t" style="left:984.5px;top:1197px;letter-spacing:1.49px;">22</span><span class="t" style="left:984.5px;top:1239px;letter-spacing:0.49px;">23</span><span class="t" style="left:984.5px;top:1281px;letter-spacing:1.49px;">24</span><span class="t" style="left:984.5px;top:1323px;letter-spacing:0.49px;">25</span><span class="t" style="left:984.5px;top:1365px;letter-spacing:1.49px;">26</span><span class="t" style="left:984.5px;top:1407px;letter-spacing:1.49px;">27</span><span class="t" style="left:984.5px;top:1449px;letter-spacing:1.49px;">28</span><span class="t" style="left:984.5px;top:1491px;letter-spacing:1.49px;">29</span><span class="t" style="left:984.5px;top:1533px;letter-spacing:0.49px;">30</span><div style="left:979.5px;top:1569.5px;width:117px;height:35px;overflow:hidden"><span class="t" style="left:4.8px;top:6px;letter-spacing:-1.5px;">31</span></div></div><div id="cells" style="left:1097px;top:309.5px;width:1283px;height:1295px;overflow:hidden"><span class="t n" style="left:3.8px;top:6px;letter-spacing:-0.13px;">6,750000e-01</span><span class="t n" style="left:215.5px;top:6px;letter-spacing:-0.15px;">-9,919319e-01</span><span class="t n" style="left:449.5px;top:6px;letter-spacing:0.27px;">-3,456855e-03</span><span class="t n" style="left:690.8px;top:6px;letter-spacing:0.41px;">5,687490e-02</span><span class="t n" style="left:934.8px;top:6px;letter-spacing:0.41px;">4,495316e-02</span><span class="t n" style="left:1186.5px;top:6px;letter-spacing:0.35px;">-3,778737e-02</span><span class="t n" style="left:3.8px;top:48px;letter-spacing:-0.13px;">7,000000e-01</span><span class="t n" style="left:215.5px;top:48px;letter-spacing:-0.15px;">-9,839078e-01</span><span class="t n" style="left:449.5px;top:48px;letter-spacing:0.27px;">-6,192933e-03</span><span class="t n" style="left:690.8px;top:48px;letter-spacing:0.41px;">5,694425e-02</span><span class="t n" style="left:933.8px;top:48px;letter-spacing:0.41px;">3,660373e-02</span><span class="t n" style="left:1186.5px;top:48px;letter-spacing:0.35px;">-4,295551e-02</span><span class="t n" style="left:3.8px;top:90px;letter-spacing:-0.13px;">7,250000e-01</span><span class="t n" style="left:215.5px;top:90px;letter-spacing:-0.15px;">-9,856753e-01</span><span class="t n" style="left:449.5px;top:90px;letter-spacing:0.27px;">-3,840795e-03</span><span class="t n" style="left:690.8px;top:90px;letter-spacing:0.41px;">6,165690e-02</span><span class="t n" style="left:933.8px;top:90px;letter-spacing:0.41px;">2,419095e-02</span><span class="t n" style="left:1186.8px;top:90px;letter-spacing:0.41px;">3,933886e-02</span><span class="t n" style="left:3.8px;top:132px;letter-spacing:-0.13px;">7,500000e-01</span><span class="t n" style="left:215.5px;top:132px;letter-spacing:-0.15px;">-9,997855e-01</span><span class="t n" style="left:449.5px;top:132px;letter-spacing:0.27px;">-7,412224e-03</span><span class="t n" style="left:690.8px;top:132px;letter-spacing:0.41px;">6,560853e-02</span><span class="t n" style="left:933.8px;top:132px;letter-spacing:0.41px;">3,229976e-02</span><span class="t n" style="left:1187px;top:132px;letter-spacing:0.41px;">1,965224e-02</span><span class="t n" style="left:3.8px;top:174px;letter-spacing:-0.13px;">7,750000e-01</span><span class="t n" style="left:215.5px;top:174px;letter-spacing:0.26px;">-1,009560e+00</span><span class="t n" style="left:449.5px;top:174px;letter-spacing:0.27px;">-8,600370e-03</span><span class="t n" style="left:690.8px;top:174px;letter-spacing:0.41px;">6,634957e-02</span><span class="t n" style="left:934px;top:174px;letter-spacing:0.41px;">1,364106e-02</span><span class="t n" style="left:1186.5px;top:174px;letter-spacing:0.27px;">-9,999551e-03</span><span class="t n" style="left:3.8px;top:216px;letter-spacing:-0.13px;">8,000000e-01</span><span class="t n" style="left:215.5px;top:216px;letter-spacing:0.26px;">-1,003832e+00</span><span class="t n" style="left:449.5px;top:216px;letter-spacing:0.35px;">-1,218222e-02</span><span class="t n" style="left:690.8px;top:216px;letter-spacing:0.41px;">6,136993e-02</span><span class="t n" style="left:933.5px;top:216px;letter-spacing:0.35px;">-2,059246e-02</span><span class="t n" style="left:1186.5px;top:216px;letter-spacing:0.35px;">-3,723441e-02</span><span class="t n" style="left:3.8px;top:258px;letter-spacing:-0.13px;">8,250000e-01</span><span class="t n" style="left:215.5px;top:258px;letter-spacing:-0.15px;">-9,998488e-01</span><span class="t n" style="left:449.5px;top:258px;letter-spacing:0.27px;">-8,485840e-03</span><span class="t n" style="left:690.8px;top:258px;letter-spacing:0.41px;">5,036634e-02</span><span class="t n" style="left:933.5px;top:258px;letter-spacing:0.27px;">-9,166621e-03</span><span class="t n" style="left:1186.5px;top:258px;letter-spacing:0.35px;">-1,653335e-02</span><span class="t n" style="left:3.8px;top:300px;letter-spacing:-0.13px;">8,500000e-01</span><span class="t n" style="left:215.5px;top:300px;letter-spacing:0.26px;">-1,004568e+00</span><span class="t n" style="left:449.5px;top:300px;letter-spacing:0.27px;">-4,470859e-03</span><span class="t n" style="left:691.8px;top:300px;letter-spacing:0.41px;">4,607366e-02</span><span class="t n" style="left:933.5px;top:300px;letter-spacing:0.35px;">-1,970720e-04</span><span class="t n" style="left:1186.5px;top:300px;letter-spacing:0.35px;">-4,226331e-02</span><span class="t n" style="left:3.8px;top:342px;letter-spacing:-0.13px;">8,750000e-01</span><span class="t n" style="left:215.5px;top:342px;letter-spacing:0.26px;">-1,007087e+00</span><span class="t n" style="left:449.5px;top:342px;letter-spacing:0.27px;">-9,679362e-03</span><span class="t n" style="left:691.8px;top:342px;letter-spacing:0.41px;">4,926688e-02</span><span class="t n" style="left:933.8px;top:342px;letter-spacing:0.32px;">9,418418e-03</span><span class="t n" style="left:1186.5px;top:342px;letter-spacing:0.35px;">-4,374662e-02</span><span class="t n" style="left:3.8px;top:384px;letter-spacing:-0.13px;">9,000000e-01</span><span class="t n" style="left:215.5px;top:384px;letter-spacing:0.26px;">-1,005045e+00</span><span class="t n" style="left:449.5px;top:384px;letter-spacing:0.27px;color:#fcfcfc;">-9,143127e-03</span><span class="t n" style="left:690.8px;top:384px;letter-spacing:0.41px;">5,418262e-02</span><span class="t n" style="left:934px;top:384px;letter-spacing:0.41px;">1,349033e-02</span><span class="t n" style="left:1186.5px;top:384px;letter-spacing:0.35px;">-1,168772e-02</span><span class="t n" style="left:3.8px;top:426px;letter-spacing:-0.13px;">9,250000e-01</span><span class="t n" style="left:215.5px;top:426px;letter-spacing:0.26px;">-1,000109e+00</span><span class="t n" style="left:450px;top:426px;letter-spacing:0.32px;">1,442602e-03</span><span class="t n" style="left:690.8px;top:426px;letter-spacing:0.41px;">5,599976e-02</span><span class="t n" style="left:934px;top:426px;letter-spacing:0.41px;">1,185007e-02</span><span class="t n" style="left:1187px;top:426px;letter-spacing:0.62px;">1,805110e-02</span><span class="t n" style="left:3.8px;top:468px;letter-spacing:-0.13px;">9,500000e-01</span><span class="t n" style="left:215.5px;top:468px;letter-spacing:-0.15px;">-9,897888e-01</span><span class="t n" style="left:449.8px;top:468px;letter-spacing:0.32px;">5,894234e-03</span><span class="t n" style="left:690.8px;top:468px;letter-spacing:0.41px;">5,978817e-02</span><span class="t n" style="left:933.8px;top:468px;letter-spacing:0.41px;">2,016655e-02</span><span class="t n" style="left:1187px;top:468px;letter-spacing:0.41px;">1,938992e-02</span><span class="t n" style="left:3.8px;top:510px;letter-spacing:-0.13px;">9,750000e-01</span><span class="t n" style="left:215.5px;top:510px;letter-spacing:-0.15px;">-9,982735e-01</span><span class="t n" style="left:449.5px;top:510px;letter-spacing:0.27px;">-2,202781e-03</span><span class="t n" style="left:690.8px;top:510px;letter-spacing:0.41px;">6,188817e-02</span><span class="t n" style="left:933.8px;top:510px;letter-spacing:0.41px;">2,421438e-02</span><span class="t n" style="left:1186.8px;top:510px;letter-spacing:0.41px;">3,421441e-02</span><span class="t n" style="left:4px;top:552px;letter-spacing:0.32px;">1,000000e+00</span><span class="t n" style="left:215.5px;top:552px;letter-spacing:0.26px;">-1,001524e+00</span><span class="t n" style="left:449.5px;top:552px;letter-spacing:0.27px;">-4,610245e-03</span><span class="t n" style="left:690.8px;top:552px;letter-spacing:0.41px;">5,850738e-02</span><span class="t n" style="left:934px;top:552px;letter-spacing:0.41px;">1,089988e-02</span><span class="t n" style="left:1186.8px;top:552px;letter-spacing:0.41px;">5,830773e-02</span><span class="t n" style="left:4px;top:594px;letter-spacing:0.32px;">1,025000e+00</span><span class="t n" style="left:215.5px;top:594px;letter-spacing:-0.15px;">-9,983920e-01</span><span class="t n" style="left:449.5px;top:594px;letter-spacing:0.27px;">-3,574315e-03</span><span class="t n" style="left:690.8px;top:594px;letter-spacing:0.41px;">5,767374e-02</span><span class="t n" style="left:933.5px;top:594px;letter-spacing:0.27px;">-6,468082e-03</span><span class="t n" style="left:1186.8px;top:594px;letter-spacing:0.41px;">5,584442e-02</span><span class="t n" style="left:4px;top:636px;letter-spacing:0.32px;">1,050000e+00</span><span class="t n" style="left:215.5px;top:636px;letter-spacing:-0.15px;">-9,896729e-01</span><span class="t n" style="left:449.5px;top:636px;letter-spacing:0.27px;">-3,327555e-03</span><span class="t n" style="left:690.8px;top:636px;letter-spacing:0.41px;">5,512563e-02</span><span class="t n" style="left:933.5px;top:636px;letter-spacing:0.35px;">-1,220703e-02</span><span class="t n" style="left:1186.8px;top:636px;letter-spacing:0.41px;">2,895885e-02</span><span class="t n" style="left:4px;top:678px;letter-spacing:0.32px;">1,075000e+00</span><span class="t n" style="left:215.5px;top:678px;letter-spacing:-0.15px;">-9,924898e-01</span><span class="t n" style="left:449.5px;top:678px;letter-spacing:0.27px;">-8,239747e-03</span><span class="t n" style="left:690.8px;top:678px;letter-spacing:0.41px;">5,084541e-02</span><span class="t n" style="left:933.5px;top:678px;letter-spacing:0.35px;">-1,030836e-02</span><span class="t n" style="left:1186.5px;top:678px;letter-spacing:0.35px;">-3,459008e-02</span><span class="t n" style="left:4px;top:720px;letter-spacing:0.32px;">1,100000e+00</span><span class="t n" style="left:215.5px;top:720px;letter-spacing:0.26px;">-1,002823e+00</span><span class="t n" style="left:449.5px;top:720px;letter-spacing:0.27px;">-3,870626e-03</span><span class="t n" style="left:690.8px;top:720px;letter-spacing:0.62px;">5,116561e-02</span><span class="t n" style="left:934.8px;top:720px;letter-spacing:0.32px;">4,197517e-03</span><span class="t n" style="left:1186.5px;top:720px;letter-spacing:0.35px;">-5,441552e-02</span><span class="t n" style="left:4px;top:762px;letter-spacing:0.32px;">1,125000e+00</span><span class="t n" style="left:215.5px;top:762px;letter-spacing:0.26px;">-1,003586e+00</span><span class="t n" style="left:449.8px;top:762px;letter-spacing:0.41px;">7,845963e-04</span><span class="t n" style="left:690.8px;top:762px;letter-spacing:0.41px;">5,467286e-02</span><span class="t n" style="left:933.8px;top:762px;letter-spacing:0.32px;">9,773170e-03</span><span class="t n" style="left:1186.5px;top:762px;letter-spacing:0.27px;">-7,048443e-03</span><span class="t n" style="left:4px;top:804px;letter-spacing:0.32px;">1,150000e+00</span><span class="t n" style="left:215.5px;top:804px;letter-spacing:-0.15px;">-9,932764e-01</span><span class="t n" style="left:449.5px;top:804px;letter-spacing:0.27px;">-7,921543e-03</span><span class="t n" style="left:690.8px;top:804px;letter-spacing:0.62px;">5,123611e-02</span><span class="t n" style="left:934px;top:804px;letter-spacing:0.41px;">1,527551e-02</span><span class="t n" style="left:1186.5px;top:804px;letter-spacing:0.35px;">-1,092772e-02</span><span class="t n" style="left:4px;top:846px;letter-spacing:0.32px;">1,175000e+00</span><span class="t n" style="left:215.5px;top:846px;letter-spacing:-0.15px;">-9,929871e-01</span><span class="t n" style="left:449.5px;top:846px;letter-spacing:0.27px;">-8,982780e-03</span><span class="t n" style="left:690.8px;top:846px;letter-spacing:0.41px;">5,254583e-02</span><span class="t n" style="left:933.8px;top:846px;letter-spacing:0.41px;">3,428602e-02</span><span class="t n" style="left:1187px;top:846px;letter-spacing:0.41px;">1,351883e-02</span><span class="t n" style="left:4px;top:888px;letter-spacing:0.32px;">1,200000e+00</span><span class="t n" style="left:215.5px;top:888px;letter-spacing:-0.15px;">-9,910665e-01</span><span class="t n" style="left:449.5px;top:888px;letter-spacing:0.27px;">-2,884290e-03</span><span class="t n" style="left:690.8px;top:888px;letter-spacing:0.41px;">5,343327e-02</span><span class="t n" style="left:933.8px;top:888px;letter-spacing:0.41px;">3,771082e-02</span><span class="t n" style="left:1186.5px;top:888px;letter-spacing:0.35px;">-1,315770e-02</span><span class="t n" style="left:4px;top:930px;letter-spacing:0.32px;">1,225000e+00</span><span class="t n" style="left:215.5px;top:930px;letter-spacing:-0.15px;">-9,844376e-01</span><span class="t n" style="left:449.5px;top:930px;letter-spacing:0.27px;">-4,274697e-03</span><span class="t n" style="left:690.8px;top:930px;letter-spacing:0.41px;">5,850428e-02</span><span class="t n" style="left:934px;top:930px;letter-spacing:0.62px;">1,811895e-02</span><span class="t n" style="left:1187px;top:930px;letter-spacing:0.41px;">1,104881e-02</span><span class="t n" style="left:4px;top:972px;letter-spacing:0.32px;">1,250000e+00</span><span class="t n" style="left:215.5px;top:972px;letter-spacing:-0.15px;">-9,922934e-01</span><span class="t n" style="left:449.5px;top:972px;letter-spacing:0.27px;">-8,163061e-03</span><span class="t n" style="left:690.8px;top:972px;letter-spacing:0.41px;">5,761855e-02</span><span class="t n" style="left:933.8px;top:972px;letter-spacing:0.32px;">2,441406e-03</span><span class="t n" style="left:1186.5px;top:972px;letter-spacing:0.27px;">-7,348666e-03</span><span class="t n" style="left:4px;top:1014px;letter-spacing:0.32px;">1,275000e+00</span><span class="t n" style="left:215.5px;top:1014px;letter-spacing:0.65px;">-1,002111e+00</span><span class="t n" style="left:449.5px;top:1014px;letter-spacing:0.35px;">-1,049427e-02</span><span class="t n" style="left:690.8px;top:1014px;letter-spacing:0.41px;">5,760883e-02</span><span class="t n" style="left:933.5px;top:1014px;letter-spacing:0.27px;">-1,797492e-03</span><span class="t n" style="left:1186.5px;top:1014px;letter-spacing:0.35px;">-4,003991e-02</span><span class="t n" style="left:4px;top:1056px;letter-spacing:0.32px;">1,300000e+00</span><span class="t n" style="left:215.5px;top:1056px;letter-spacing:0.26px;">-1,007259e+00</span><span class="t n" style="left:449.5px;top:1056px;letter-spacing:0.35px;">-1,038819e-02</span><span class="t n" style="left:690.8px;top:1056px;letter-spacing:0.41px;">5,956979e-02</span><span class="t n" style="left:933.8px;top:1056px;letter-spacing:0.32px;">9,545830e-03</span><span class="t n" style="left:1186.5px;top:1056px;letter-spacing:0.35px;">-1,054003e-02</span><span class="t n" style="left:4px;top:1098px;letter-spacing:0.32px;">1,325000e+00</span><span class="t n" style="left:215.5px;top:1098px;letter-spacing:0.26px;">-1,003344e+00</span><span class="t n" style="left:449.5px;top:1098px;letter-spacing:0.27px;">-8,988468e-03</span><span class="t n" style="left:690.8px;top:1098px;letter-spacing:0.41px;">5,967987e-02</span><span class="t n" style="left:934.8px;top:1098px;letter-spacing:0.41px;">4,993322e-02</span><span class="t n" style="left:1186.5px;top:1098px;letter-spacing:0.35px;">-2,250995e-02</span><span class="t n" style="left:4px;top:1140px;letter-spacing:0.32px;">1,350000e+00</span><span class="t n" style="left:215.5px;top:1140px;letter-spacing:0.26px;">-1,005071e+00</span><span class="t n" style="left:449.5px;top:1140px;letter-spacing:0.27px;">-6,626595e-03</span><span class="t n" style="left:690.8px;top:1140px;letter-spacing:0.41px;">6,214104e-02</span><span class="t n" style="left:933.8px;top:1140px;letter-spacing:0.83px;">5,711197e-02</span><span class="t n" style="left:1186.5px;top:1140px;letter-spacing:0.54px;">-2,788112e-02</span><span class="t n" style="left:4px;top:1182px;letter-spacing:0.32px;">1,375000e+00</span><span class="t n" style="left:215.5px;top:1182px;letter-spacing:-0.15px;">-9,996919e-01</span><span class="t n" style="left:449.5px;top:1182px;letter-spacing:0.27px;">-3,227141e-03</span><span class="t n" style="left:690.8px;top:1182px;letter-spacing:0.41px;">5,777136e-02</span><span class="t n" style="left:934px;top:1182px;letter-spacing:0.41px;">1,496580e-02</span><span class="t n" style="left:1186.8px;top:1182px;letter-spacing:0.41px;">3,038338e-02</span><span class="t n" style="left:4px;top:1224px;letter-spacing:0.32px;">1,400000e+00</span><span class="t n" style="left:215.5px;top:1224px;letter-spacing:-0.15px;">-9,962435e-01</span><span class="t n" style="left:449.5px;top:1224px;letter-spacing:0.27px;">-5,319106e-03</span><span class="t n" style="left:690.8px;top:1224px;letter-spacing:0.41px;">5,635786e-02</span><span class="t n" style="left:933.5px;top:1224px;letter-spacing:0.35px;">-1,139216e-02</span><span class="t n" style="left:1186.8px;top:1224px;letter-spacing:0.62px;">5,396117e-02</span><span class="t n" style="left:4px;top:1266px;letter-spacing:0.32px;">1,425000e+00</span><span class="t n" style="left:215.5px;top:1266px;letter-spacing:0.26px;">-1,000026e+00</span><span class="t n" style="left:449.5px;top:1266px;letter-spacing:0.27px;">-4,394517e-03</span><span class="t n" style="left:690.8px;top:1266px;letter-spacing:0.41px;">5,822336e-02</span><span class="t n" style="left:933.5px;top:1266px;letter-spacing:0.27px;">-3,313643e-03</span><span class="t n" style="left:1186.8px;top:1266px;letter-spacing:0.41px;">6,530229e-02</span></div></div>
<div id="properties"><div style="left:2434px;top:184px;width:765px;height:1499px;border:1px solid #c3c6c8;border-radius:3px;background:#f4f5f5"></div><span class="t" style="left:2439.5px;top:198px;letter-spacing:0.53px;">Spreadsheet</span><svg style="left:3088px;top:185px" width="110" height="56" viewBox="0 0 110 56" ><path d="M25 16l12 12l-12 12l-12-12z" fill="none" stroke="#8b8f92" stroke-width="3"/><circle cx="80" cy="28" r="24" fill="#8e9296"/><path d="M69 17l22 22M91 17l-22 22" stroke="#fcfcfc" stroke-width="3" stroke-linecap="round"/></svg><div style="left:2436px;top:246px;width:761.5px;height:1435px;border:1px solid #93cee9;border-radius:3px"></div><span class="t" style="left:2443.3px;top:265px;letter-spacing:1.35px;">Name</span><span class="t" style="left:2443.8px;top:327px;letter-spacing:1.32px;">Comment</span><span class="t b" style="left:2443.7px;top:395px;letter-spacing:0.39px;">Dimensions:</span><span class="t" style="left:2444px;top:450px;letter-spacing:-0.77px;">Rows</span><span class="t" style="left:2443.6px;top:512px;letter-spacing:0.83px;">Columns</span><span class="t b" style="left:2443.5px;top:580px;letter-spacing:1.14px;">Format:</span><span class="t" style="left:2443.6px;top:628px;letter-spacing:1.16px;">Column comments</span><div style="left:2742px;top:254px;width:447.5px;height:53.5px;border:1px solid #bcbfc2;border-radius:3px;background:#fcfcfc"></div><div style="left:2742px;top:316px;width:447.5px;height:53.5px;border:1px solid #bcbfc2;border-radius:3px;background:#fcfcfc"></div><div style="left:2742px;top:439.5px;width:447.5px;height:53.5px;border:1px solid #bcbfc2;border-radius:3px;background:#fcfcfc"></div><div style="left:2742px;top:501.5px;width:447.5px;height:53.5px;border:1px solid #bcbfc2;border-radius:3px;background:#fcfcfc"></div><span class="t" style="left:2750.5px;top:265px;letter-spacing:0.47px;">sensor data</span><span class="t" style="left:2749.5px;top:450px;letter-spacing:0.32px;">191774</span><span class="t" style="left:2749.5px;top:512px;letter-spacing:1.49px;">97</span><svg style="left:3165px;top:450px" width="24" height="95" viewBox="3165 450 24 95" ><path d="M3173.5 463l4.5-4.5l4.5 4.5M3173.5 469l4.5 4.5l4.5-4.5M3173.5 525l4.5-4.5l4.5 4.5M3173.5 531l4.5 4.5l4.5-4.5" stroke="#31363b" stroke-width="1.3" fill="none"/></svg><div style="left:2743px;top:636px;width:16px;height:16px;border:1px solid #84888c;border-radius:3px;background:#f8f9f9"></div><div style="left:3031px;top:1621.4px;width:45px;height:45px;border:1px solid #c0c3c5;border-radius:3px;background:linear-gradient(#e3e4e6,#dcdddf);box-shadow:0 1px 1.5px rgba(0,0,0,.2)"></div><div style="left:3079px;top:1621.4px;width:45px;height:45px;border:1px solid #c0c3c5;border-radius:3px;background:linear-gradient(#f3f4f5,#e8e9ea);box-shadow:0 1px 1.5px rgba(0,0,0,.2)"></div><div style="left:3127px;top:1621.4px;width:45px;height:45px;border:1px solid #c0c3c5;border-radius:3px;background:linear-gradient(#f3f4f5,#e8e9ea);box-shadow:0 1px 1.5px rgba(0,0,0,.2)"></div><svg style="left:3030px;top:1620px" width="146" height="48" viewBox="3030 1620 146 48" ><path d="M3042 1632h8l3 3h13v5h-15l-3 3h-6z" fill="#8b8e92"/><path d="M3042.7 1640v15.3h22.6v-17" fill="none" stroke="#8b8e92" stroke-width="1.5"/><path d="M3090.75 1632.75h16.5l6 6v16.5h-22.5M3090.75 1632.75v22.5M3096.5 1632.75v8h11v-8M3095.5 1655.25v-8h13v8" fill="none" stroke="#31363b" stroke-width="1.5"/><rect x="3103.5" y="1632.75" width="4" height="8" fill="#31363b"/><path d="M3138.75 1632.75h16.5l6 6v5M3138.75 1632.75v22.5h11M3144.5 1632.75v8h11v-8M3143.5 1655.25v-8h9" fill="none" stroke="#31363b" stroke-width="1.5"/><rect x="3151.5" y="1632.75" width="4" height="8" fill="#31363b"/><path d="M3151.5 1652l7.5-7.5l3.5 3.5l-7.5 7.5l-4.5 1z" fill="none" stroke="#31363b" stroke-width="1.5"/><path d="M3157 1646.5l2.5-2.5l3.5 3.5l-2.5 2.5z" fill="#31363b"/></svg><svg style="left:2606px;top:760px" width="50" height="64" viewBox="2606 760 50 64" ><path d="M2620.15 773.3V804.6H2627.6L2634.2 810.9Q2635.2 811.5 2635.7 809.7V802L2641.7 795.7Z" fill="#4d4d4d" stroke="#fff" stroke-width="4.2" stroke-linejoin="round" paint-order="stroke" style="filter:drop-shadow(0 1.5px 2px rgba(0,0,0,.28))"/></svg></div>
<div style="left:0px;top:1724.5px;width:3200px;height:4px;background:linear-gradient(rgba(47,51,56,0),rgba(47,51,56,.95))"></div><div style="left:0px;top:1728.5px;width:3200px;height:3px;background:#2e3237"></div><div style="left:80px;top:1729.7px;width:58px;height:2px;background:#3a9fd4"></div>
</div></body></html>
